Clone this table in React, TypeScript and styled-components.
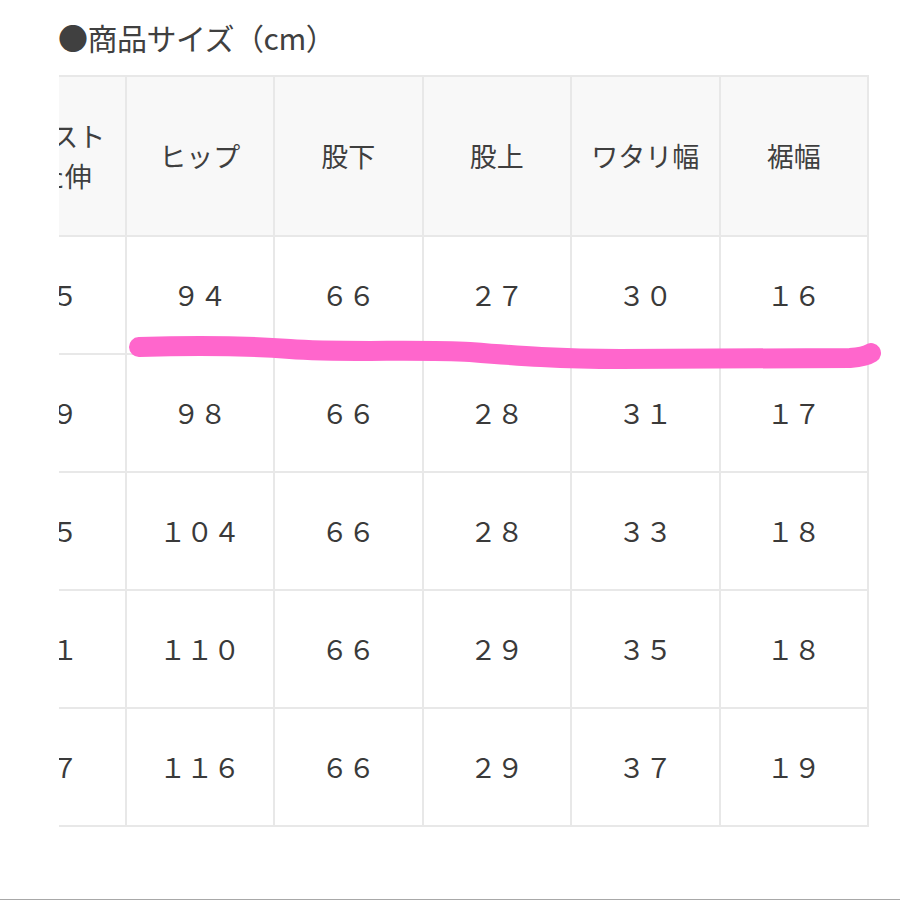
import React from 'react';
import styled, { createGlobalStyle } from 'styled-components';

const Global = createGlobalStyle`
  html, body {
    margin: 0;
    padding: 0;
    background: #ffffff;
  }
  body {
    font-family: "Noto Sans CJK JP", "Noto Sans", sans-serif;
    color: #3a3a3a;
  }
`;

const Page = styled.div`
  position: relative;
  width: 900px;
  height: 899px;
  border-bottom: 1px solid #a8a8a8;
  overflow: hidden;
`;

const Title = styled.h2`
  margin: 0;
  padding: 16px 0 0 58px;
  height: 75px;
  box-sizing: border-box;
  font-size: 30px;
  font-weight: 400;
  line-height: 42px;
  color: #404040;
  letter-spacing: -0.5px;
`;

const Clip = styled.div`
  margin-left: 59px;
  overflow: hidden;
`;

const Table = styled.table`
  margin-left: -83px;
  border-collapse: collapse;
  table-layout: fixed;
  width: 893px;
`;

const HeadCell = styled.th`
  height: 158px;
  padding: 0;
  background: #f8f8f8;
  border: 2px solid #e8e8e8;
  font-size: 27px;
  font-weight: 400;
  line-height: 40px;
  color: #3f3f3f;
  text-align: center;
  vertical-align: middle;
  white-space: pre-line;
`;

const Cell = styled.td`
  height: 116px;
  padding: 0;
  background: #ffffff;
  border: 2px solid #e8e8e8;
  font-size: 27px;
  line-height: 40px;
  color: #3a3a3a;
  text-align: center;
  vertical-align: middle;
`;

const Marker = styled.svg`
  position: absolute;
  left: 0;
  top: 0;
  pointer-events: none;
`;

const headers = ['ウエスト\nまた伸', 'ヒップ', '股下', '股上', 'ワタリ幅', '裾幅'];

const rows = [
  ['６５', '９４', '６６', '２７', '３０', '１６'],
  ['６９', '９８', '６６', '２８', '３１', '１７'],
  ['７５', '１０４', '６６', '２８', '３３', '１８'],
  ['８１', '１１０', '６６', '２９', '３５', '１８'],
  ['８７', '１１６', '６６', '２９', '３７', '１９'],
];

export default function App() {
  return (
    <Page>
      <Global />
      <Title>●商品サイズ（cm）</Title>
      <Clip>
        <Table>
          <thead>
            <tr>
              {headers.map((h) => (
                <HeadCell key={h}>{h}</HeadCell>
              ))}
            </tr>
          </thead>
          <tbody>
            {rows.map((r, i) => (
              <tr key={i}>
                {r.map((v, j) => (
                  <Cell key={j}>{v}</Cell>
                ))}
              </tr>
            ))}
          </tbody>
        </Table>
      </Clip>
      <Marker width="900" height="900" viewBox="0 0 900 900">
        <path
          d="M139,347 C200,345 250,346 290,349 C340,353 420,349 470,352 C520,356 560,359 620,359 L850,358 C862,357 868,355 871,353"
          fill="none"
          stroke="#ff66cc"
          strokeWidth="20"
          strokeLinecap="round"
          strokeLinejoin="round"
        />
      </Marker>
    </Page>
  );
}
